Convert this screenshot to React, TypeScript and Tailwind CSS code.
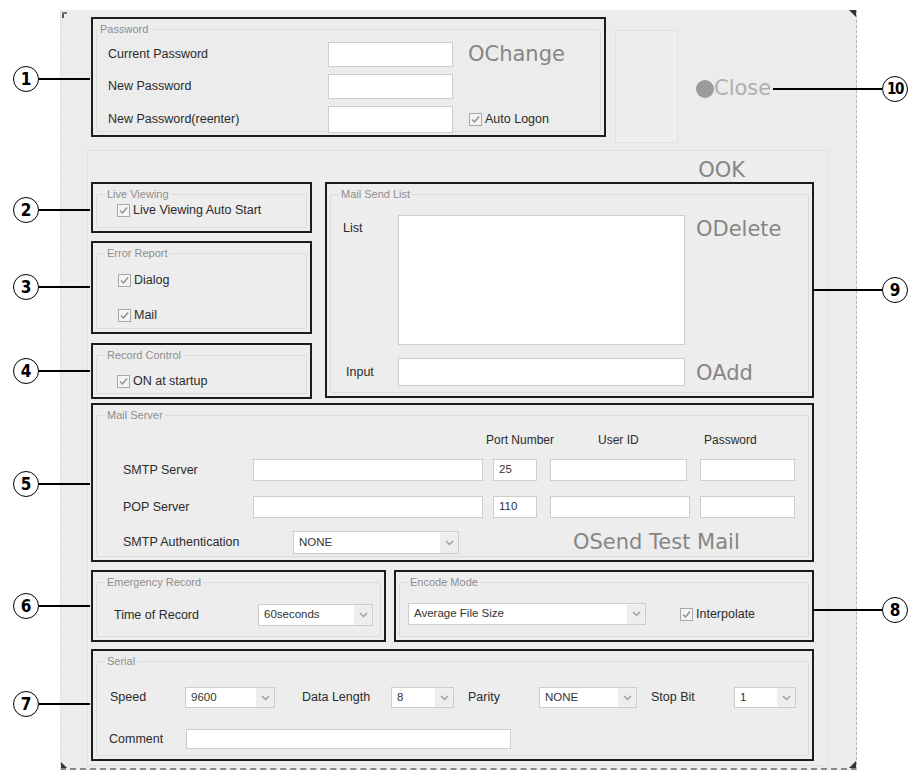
import type { ReactNode } from 'react';

const Check = () => (
    <span className="flex h-[13px] w-[13px] shrink-0 items-center justify-center border border-[#a8a8a8] bg-[#f4f4f4]">
        <svg width="11" height="11" viewBox="0 0 11 11">
            <path d="M2 5.5 L4.5 8 L9 2.5" fill="none" stroke="#8e8e8e" strokeWidth="1.4" />
        </svg>
    </span>
);

const CheckLabel = ({ children, className = '' }: { children: ReactNode; className?: string }) => (
    <div className={`flex h-[18px] items-center ${className}`}>
        <Check />
        <span className="ml-[3px] text-[12.5px] text-[#2b2b2b]">{children}</span>
    </div>
);

const Field = ({ className = '', value = '' }: { className?: string; value?: string }) => (
    <div className={`flex items-center border border-[#cdcdcd] bg-white pl-[5px] text-[11.5px] text-[#333] ${className}`}>
        {value}
    </div>
);

const Select = ({ className = '', value }: { className?: string; value: string }) => (
    <div className={`flex items-stretch border border-[#cdcdcd] bg-white ${className}`}>
        <span className="flex flex-1 items-center pl-[5px] text-[11.5px] text-[#333]">{value}</span>
        <span className="flex w-[18px] items-center justify-center bg-[#eeeeee]">
            <svg width="9" height="6" viewBox="0 0 9 6">
                <path d="M1 1 L4.5 4.5 L8 1" fill="none" stroke="#a0a0a0" strokeWidth="1.5" />
            </svg>
        </span>
    </div>
);

const Box = ({
    legend,
    className = '',
    legendClass = 'ml-[8px]',
    children,
}: {
    legend: string;
    className?: string;
    legendClass?: string;
    children: ReactNode;
}) => (
    <div className={`border-2 border-[#1b1b1b] p-[3px] ${className}`}>
        <fieldset className="h-full min-w-0 rounded-[2px] border border-[#dcdcdc]">
            <legend className={`px-[2px] text-[11px] leading-[14px] text-[#8e8e8e] ${legendClass}`}>{legend}</legend>
            {children}
        </fieldset>
    </div>
);

const Btn = ({ children, className = '' }: { children: ReactNode; className?: string }) => (
    <span className={`font-['DejaVu_Sans',sans-serif] text-[21px] leading-none whitespace-nowrap text-[#868686] ${className}`}>
        {children}
    </span>
);

const Label = ({ children, className = '' }: { children: ReactNode; className?: string }) => (
    <span className={`text-[12.5px] whitespace-nowrap text-[#2b2b2b] ${className}`}>{children}</span>
);

// annotation markers drawn over the screenshot
const callouts = [
    { n: '1', y: 79, side: 'l' },
    { n: '2', y: 210, side: 'l' },
    { n: '3', y: 287, side: 'l' },
    { n: '4', y: 371, side: 'l' },
    { n: '5', y: 484, side: 'l' },
    { n: '6', y: 606, side: 'l' },
    { n: '7', y: 704, side: 'l' },
    { n: '8', y: 610, side: 'r' },
    { n: '9', y: 290, side: 'r' },
    { n: '10', y: 89, side: 'r' },
];

export default function App() {
    return (
        <div className="relative h-[781px] w-[914px] overflow-hidden bg-white pl-[60px] pt-[10px] font-['Liberation_Sans',Arial,sans-serif]">
            <div className="relative h-[760px] w-[797px] border-b-2 border-l border-r border-dashed border-b-[#8a8a8a] border-l-[#dcdcdc] border-r-[#b5b5b5] bg-[#ececec] pl-[26px] pt-[7px]">
                {/* row 1 */}
                <div className="flex items-start">
                    <Box legend="Password" className="ml-[4px] h-[120px] w-[515px]" legendClass="ml-[1px]">
                        <div className="mt-[6px] grid grid-cols-[220px_125px_auto] grid-rows-[25px_25px_27px] gap-y-[7px] pl-[11px]">
                            <Label className="self-center">Current Password</Label>
                            <Field />
                            <Btn className="ml-[15px] self-center">OChange</Btn>
                            <Label className="self-center">New Password</Label>
                            <Field />
                            <span />
                            <Label className="self-center">New Password(reenter)</Label>
                            <Field />
                            <CheckLabel className="ml-[16px] self-center">Auto Logon</CheckLabel>
                        </div>
                    </Box>
                    <div className="ml-[9px] mt-[13px] h-[113px] w-[63px] border border-[#e2e2e2] bg-[#eeeeee]" />
                    <div className="ml-[18px] mt-[61px] flex items-center">
                        <span className="h-[18px] w-[18px] rounded-full bg-[#9b9b9b]" />
                        <Btn className="text-[#b0b0b0]">Close</Btn>
                    </div>
                </div>

                {/* main group */}
                <div className="mt-[7px] w-[741px] border border-[#e0e0e0] bg-[#ededed] pb-[4px] pl-[3px]">
                    <div className="flex h-[31px] justify-end pr-[82px] pt-[9px]">
                        <Btn>OOK</Btn>
                    </div>

                    <div className="flex gap-[13px]">
                        <div className="flex w-[221px] flex-col">
                            <Box legend="Live Viewing" className="h-[51px]">
                                <CheckLabel className="pl-[20px]">Live Viewing Auto Start</CheckLabel>
                            </Box>
                            <Box legend="Error Report" className="mt-[8px] h-[93px]">
                                <CheckLabel className="mt-[11px] pl-[21px]">Dialog</CheckLabel>
                                <CheckLabel className="mt-[17px] pl-[21px]">Mail</CheckLabel>
                            </Box>
                            <Box legend="Record Control" className="mt-[9px] h-[56px]">
                                <CheckLabel className="mt-[10px] pl-[20px]">ON at startup</CheckLabel>
                            </Box>
                        </div>

                        <Box legend="Mail Send List" className="h-[216px] w-[489px]">
                            <div className="mt-[14px] flex items-start pl-[12px]">
                                <Label className="mt-[4px] w-[55px]">List</Label>
                                <Field className="h-[130px] w-[287px]" />
                                <Btn className="ml-[11px] mt-[4px]">ODelete</Btn>
                            </div>
                            <div className="mt-[13px] flex items-center pl-[15px]">
                                <Label className="w-[52px]">Input</Label>
                                <Field className="h-[28px] w-[287px]" />
                                <Btn className="ml-[11px] mt-[2px]">OAdd</Btn>
                            </div>
                        </Box>
                    </div>

                    <Box legend="Mail Server" className="mt-[4px] h-[159px] w-[723px]">
                        <div className="mt-[10px] flex h-[16px] items-center pl-[389px] text-[12px] text-[#2b2b2b]">
                            <span className="w-[112px]">Port Number</span>
                            <span className="w-[106px]">User ID</span>
                            <span>Password</span>
                        </div>
                        <div className="mt-[11px] flex h-[22px] items-stretch pl-[26px]">
                            <Label className="w-[130px] self-center">SMTP Server</Label>
                            <Field className="w-[230px]" />
                            <Field className="ml-[10px] w-[44px]" value="25" />
                            <Field className="ml-[13px] w-[137px]" />
                            <Field className="ml-[13px] w-[95px]" />
                        </div>
                        <div className="mt-[15px] flex h-[22px] items-stretch pl-[26px]">
                            <Label className="w-[130px] self-center">POP Server</Label>
                            <Field className="w-[230px]" />
                            <Field className="ml-[10px] w-[44px]" value="110" />
                            <Field className="ml-[13px] w-[140px]" />
                            <Field className="ml-[10px] w-[95px]" />
                        </div>
                        <div className="mt-[13px] flex h-[23px] items-center pl-[26px]">
                            <Label className="w-[170px]">SMTP Authentication</Label>
                            <Select className="h-[23px] w-[166px]" value="NONE" />
                            <Btn className="ml-[114px] text-[19.5px]">OSend Test Mail</Btn>
                        </div>
                    </Box>

                    <div className="mt-[8px] flex gap-[8px]">
                        <Box legend="Emergency Record" className="h-[72px] w-[295px]">
                            <div className="mt-[15px] flex h-[22px] items-center pl-[17px]">
                                <Label className="w-[144px]">Time of Record</Label>
                                <Select className="h-[22px] w-[115px]" value="60seconds" />
                            </div>
                        </Box>
                        <Box legend="Encode Mode" className="h-[72px] w-[420px]">
                            <div className="mt-[14px] flex h-[22px] items-center pl-[8px]">
                                <Select className="h-[22px] w-[238px]" value="Average File Size" />
                                <CheckLabel className="ml-[34px]">Interpolate</CheckLabel>
                            </div>
                        </Box>
                    </div>

                    <Box legend="Serial" className="mt-[7px] h-[112px] w-[723px]">
                        <div className="mt-[19px] flex h-[21px] items-center pl-[13px]">
                            <Label className="w-[75px]">Speed</Label>
                            <Select className="h-[21px] w-[90px]" value="9600" />
                            <Label className="ml-[27px] w-[89px]">Data Length</Label>
                            <Select className="h-[21px] w-[63px]" value="8" />
                            <Label className="ml-[14px] w-[71px]">Parity</Label>
                            <Select className="h-[21px] w-[98px]" value="NONE" />
                            <Label className="ml-[14px] w-[83px]">Stop Bit</Label>
                            <Select className="h-[21px] w-[62px]" value="1" />
                        </div>
                        <div className="mt-[21px] flex h-[20px] items-center pl-[12px]">
                            <Label className="w-[77px]">Comment</Label>
                            <Field className="h-[20px] w-[325px]" />
                        </div>
                    </Box>
                </div>

                {/* corner marks of the scanned window */}
                <span className="absolute left-[1px] top-[2px] h-[6px] w-[2px] bg-[#555]" />
                <span className="absolute left-[1px] top-[2px] h-[2px] w-[5px] bg-[#777]" />
                <span className="absolute right-0 top-0 h-0 w-0 border-l-[7px] border-t-[7px] border-l-transparent border-t-[#333]" />
                <span className="absolute bottom-0 left-0 h-0 w-0 border-b-[6px] border-r-[6px] border-b-[#333] border-r-transparent" />
                <span className="absolute bottom-0 right-0 h-0 w-0 border-b-[7px] border-l-[7px] border-b-[#333] border-l-transparent" />
            </div>

            {callouts.map((c) => (
                <div key={c.n}>
                    <span
                        className={`absolute h-[2px] bg-black ${c.side === 'l' ? 'left-[39px] w-[51px]' : c.n === '10' ? 'left-[773px] w-[109px]' : 'left-[813px] w-[69px]'}`}
                        style={{ top: c.y - 1 }}
                    />
                    <span
                        className={`absolute flex h-[26px] w-[26px] items-center justify-center rounded-full border-[1.5px] border-black bg-white font-['DejaVu_Sans_Condensed','Liberation_Sans',sans-serif] font-bold leading-none text-black ${c.side === 'l' ? 'left-[13px]' : 'left-[882px]'} ${c.n === '10' ? 'text-[15px] tracking-[-1.5px]' : 'text-[17px]'}`}
                        style={{ top: c.y - 13 }}
                    >
                        {c.n}
                    </span>
                </div>
            ))}
        </div>
    );
}
